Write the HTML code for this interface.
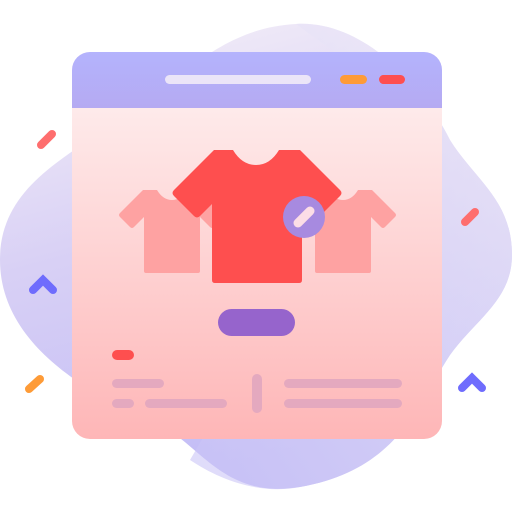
<!DOCTYPE html><html><head><style>body{margin:0;background:#fff}</style></head><body>
<svg width="512" height="512" viewBox="0 0 512 512" xmlns="http://www.w3.org/2000/svg">
<defs>
<linearGradient id="bl" x1="0" y1="0" x2="0.3" y2="1"><stop offset="0" stop-color="#f7f2f8"/><stop offset="0.5" stop-color="#d8d0f5"/><stop offset="1" stop-color="#c2bcf6"/></linearGradient>
<linearGradient id="bl2" x1="1" y1="0" x2="0" y2="1"><stop offset="0" stop-color="#f6f2f8"/><stop offset="1" stop-color="#c8c2f6"/></linearGradient>
<linearGradient id="pg" x1="0" y1="0" x2="0" y2="1"><stop offset="0" stop-color="#fef3f3"/><stop offset="1" stop-color="#feb6b7"/></linearGradient>
<linearGradient id="hd" x1="0" y1="0" x2="0" y2="1"><stop offset="0" stop-color="#b4b3fd"/><stop offset="1" stop-color="#b5aaf2"/></linearGradient>
<path id="ss" d="M-29 190 H-15 Q-9 200 0 200 Q9 200 15 190 H29 L52 213 Q54 215 52 217 L42 227 Q40 229 38 227 L28 217 V271 Q28 273 26 273 H-26 Q-28 273 -28 271 V217 L-38 227 Q-40 229 -42 227 L-52 217 Q-54 215 -52 213Z"/>
</defs>
<path d="M296 24 C360 20 420 80 450 140 C475 180 512 200 512 255 C512 300 475 320 450 355 C420 400 400 470 300 487 C220 500 200 440 150 420 C80 390 0 340 0 260 C0 190 60 160 120 120 C180 80 220 28 296 24Z" fill="url(#bl)"/>
<path d="M296 24 C360 20 420 80 450 140 C475 180 512 200 512 255 C512 300 475 320 450 355 C420 400 400 470 300 487 C260 495 220 480 190 460 L400 100Z" fill="url(#bl2)" opacity="0.6"/>
<rect x="72" y="52" width="370" height="387" rx="18" fill="url(#pg)"/>
<path d="M72 108 V70 a18 18 0 0 1 18 -18 H424 a18 18 0 0 1 18 18 V108Z" fill="url(#hd)"/>
<rect x="165" y="75" width="146" height="9" rx="4.5" fill="#ebe5f8"/>
<rect x="340" y="75" width="27" height="9" rx="4.5" fill="#fe9b37"/>
<rect x="379" y="75" width="26" height="9" rx="4.5" fill="#fe4f50"/>
<g fill="#fea2a2">
<use href="#ss" transform="translate(172 0)"/>
<use href="#ss" transform="translate(343 0)"/>
</g>
<path d="M214 150 H233 Q242 165 256 165 Q270 165 279 150 H300 L340 190 Q343 193 340 196 L318 218 L302 204 V280 Q302 283 299 283 H215 Q212 283 212 280 V204 L200 216 Q197 219 194 216 L174 196 Q171 193 174 190Z" fill="#fe4f4f"/>
<circle cx="304" cy="217" r="21" fill="#a78ae0"/>
<line x1="298" y1="223" x2="310" y2="211" stroke="#fcdde6" stroke-width="9" stroke-linecap="round"/>
<rect x="218" y="309" width="77" height="27" rx="13.5" fill="#9664cc"/>
<rect x="112" y="350" width="22" height="10" rx="5" fill="#fe4f4f"/>
<g fill="#e4a9bf">
<rect x="112" y="379" width="52" height="9" rx="4.5"/>
<rect x="112" y="399" width="22" height="9" rx="4.5"/>
<rect x="145" y="399" width="82" height="9" rx="4.5"/>
<rect x="252" y="374" width="10" height="39" rx="5"/>
<rect x="284" y="379" width="118" height="9" rx="4.5"/>
<rect x="284" y="399" width="118" height="9" rx="4.5"/>
</g>
<g stroke-linecap="round" stroke-width="8" fill="none">
<line x1="41" y1="145" x2="52" y2="134" stroke="#fe6e6e"/>
<line x1="465" y1="222" x2="475" y2="212" stroke="#fe6e6e"/>
<line x1="29" y1="389" x2="40" y2="379" stroke="#fe9b37"/>
<path d="M33 290 L43 280 L53 290" stroke="#6f6cfd"/>
<path d="M462 388 L472 378 L482 388" stroke="#6f6cfd"/>
</g>
</svg>
</body></html>
